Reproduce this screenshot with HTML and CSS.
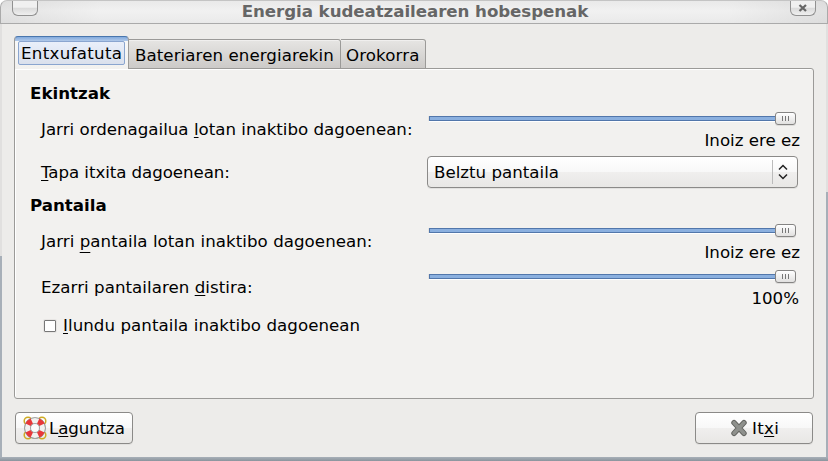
FILE: index.html
```html
<!DOCTYPE html>
<html lang="eu">
<head>
<meta charset="utf-8">
<title>Energia kudeatzailearen hobespenak</title>
<link rel="stylesheet" href="styles.css">
</head>
<body>
<div class="window">
  <header class="titlebar">
    <div class="wm-button"></div>
    <h1>Energia kudeatzailearen hobespenak</h1>
    <div class="wm-button wm-close"><svg width="10" height="9" viewBox="0 0 10 9"><path d="M1.5 1 8 7M8 1 1.5 7" stroke="#666" stroke-width="2.3"/></svg></div>
  </header>
  <main class="client">
    <nav class="tabs">
      <div class="tab active"><span class="focus">Entxufatuta</span></div>
      <div class="tab battery">Bateriaren energiarekin</div>
      <div class="tab general">Orokorra</div>
    </nav>
    <section class="panel">
      <h2>Ekintzak</h2>
      <div class="row">
        <label>Jarri ordenagailua <u>l</u>otan inaktibo dagoenean:</label>
        <div class="scale"><div class="slider"><div class="trough"></div><div class="thumb"><i></i><i></i><i></i></div></div><div class="value">Inoiz ere ez</div></div>
      </div>
      <div class="row combo-row">
        <label><u>T</u>apa itxita dagoenean:</label>
        <div class="combo"><span>Belztu pantaila</span><div class="arrows"><svg width="10" height="16" viewBox="0 0 10 16"><path d="M1 5.5 5 1.5 9 5.5M1 10.5 5 14.5 9 10.5" fill="none" stroke="#222" stroke-width="1.5"/></svg></div></div>
      </div>
      <h2 class="second">Pantaila</h2>
      <div class="row screen">
        <label>Jarri <u class="low">p</u>antaila lotan inaktibo dagoenean:</label>
        <div class="scale"><div class="slider"><div class="trough"></div><div class="thumb"><i></i><i></i><i></i></div></div><div class="value">Inoiz ere ez</div></div>
      </div>
      <div class="row brightness">
        <label>Ezarri pantailaren <u>d</u>istira:</label>
        <div class="scale"><div class="slider"><div class="trough"></div><div class="thumb"><i></i><i></i><i></i></div></div><div class="value percent">100%</div></div>
      </div>
      <div class="check"><span class="box"></span><span class="check-text"><u>I</u>lundu pantaila inaktibo dagoenean</span></div>
    </section>
    <footer class="actions">
      <div class="button help">
        <svg width="24" height="24" viewBox="0 0 24 24">
          <g fill="none" stroke="#cfab22" stroke-width="1.5"><circle cx="5" cy="5" r="3.8"/><circle cx="19" cy="5" r="3.8"/><circle cx="5" cy="19" r="3.8"/><circle cx="19" cy="19" r="3.8"/></g>
          <circle cx="12" cy="12" r="7.4" fill="none" stroke="#8a8a88" stroke-width="6.8"/>
          <circle cx="12" cy="12" r="7.4" fill="none" stroke="#f1f1ef" stroke-width="5.2"/>
          <circle cx="12" cy="12" r="7.6" fill="none" stroke="#e8383a" stroke-width="5.8" pathLength="80" stroke-dasharray="9 11" stroke-dashoffset="-5.5"/>
          <circle cx="12" cy="12" r="4.5" fill="#fcfcfc" stroke="#999" stroke-width=".8"/>
        </svg>
        <span>L<u>a</u>guntza</span>
      </div>
      <div class="button close">
        <svg width="18" height="18" viewBox="0 0 18 18"><path d="M4 3.7 14 14.3M14 3.7 4 14.3" stroke="#62635f" stroke-width="5.4" stroke-linecap="round"/><path d="M4 3.7 14 14.3M14 3.7 4 14.3" stroke="#8f918d" stroke-width="3.5" stroke-linecap="round"/></svg>
        <span>It<u>x</u>i</span>
      </div>
    </footer>
  </main>
</div>
</body>
</html>
```
FILE: styles.css
```css
* { box-sizing: border-box; }
body { margin: 0; width: 828px; height: 461px; overflow: hidden; font: 16.67px/20px "DejaVu Sans", sans-serif; color: #000; background: #fff; white-space: nowrap; }
.window { height: 461px; display: flex; flex-direction: column; }
.titlebar { height: 24px; display: flex; justify-content: space-between; align-items: flex-start; padding: 0 11px; border: 1px solid #aaa; border-top-color: #c4c4c4; border-radius: 7px 7px 0 0; background: linear-gradient(to right, rgba(218,218,218,.6), rgba(240,240,240,.5) 12% 88%, rgba(218,218,218,.7)), linear-gradient(#e2e2e2, #f2f2f2 45%, #e3e3e3); }
.titlebar h1 { margin: 1px 0 0 2px; font-size: 16.67px; line-height: 20px; font-weight: bold; letter-spacing: -.06px; color: #666; }
.wm-button { width: 26px; height: 15px; border: 1px solid #919191; border-top: 0; border-radius: 0 0 6px 6px; background: linear-gradient(#f0f0f0 45%, #dadada 50%, #efefef); display: flex; justify-content: center; align-items: center; }
.client { flex: 1; display: flex; flex-direction: column; padding: 12px 12px 0; border: solid transparent; border-width: 0 2px 4px; background: linear-gradient(#edecea, #edecea) padding-box, linear-gradient(#a8b0b8, #8b949d) bottom / 100% 4px no-repeat border-box, linear-gradient(#e1e0df 232px, #a7afb8 232px) left / 50% 100% no-repeat border-box, linear-gradient(#e1e0df 168px, #a7afb8 168px) right / 50% 100% no-repeat border-box; }
.tabs { display: flex; align-items: flex-end; height: 33px; z-index: 1; }
.tab { height: 30px; padding: 6px 0 0 6px; border: 1px solid #9b9a98; border-left-width: 0; border-radius: 0 3px 0 0; background: linear-gradient(#e6e5e3, #cccac8); box-shadow: inset 0 1px #f0efee; }
.tab.active { width: 115px; height: 33px; padding: 2px 3px 0; border: 1px solid #9b9a98; border-top: 1px solid #4976ad; border-bottom: 0; border-radius: 4px 4px 0 0; background: linear-gradient(#82aadd, #b1c9e9 4px, #f8f8f7 4px, #f2f1ef); box-shadow: none; letter-spacing: .3px; }
.focus { display: block; height: 24px; margin-top: 2px; padding: 2px 0 0 2px; line-height: 19px; border: 1px solid #8aa5cf; border-radius: 2px; background: linear-gradient(#e9effa, #dae0ec); }
.battery { width: 212px; letter-spacing: .07px; }
.general { width: 85px; padding-left: 5px; letter-spacing: .1px; }
.panel { height: 331px; margin-top: -1px; padding: 15px 15px 0; border: 1px solid #9b9a98; border-radius: 0 3px 3px 3px; background: #f2f1ef; box-shadow: inset 1px 1px #fff; }
h2 { margin: 0 0 5px; font-size: 16.67px; line-height: 20px; }
h2.second { margin-top: 8px; }
.row { display: grid; grid-template-columns: 386px 371px; align-items: center; height: 41px; padding-left: 11px; }
.combo-row { height: 32px; margin-top: 6px; }
.combo-row label { padding-top: 1px; letter-spacing: -.07px; }
.screen label { letter-spacing: .04px; }
.brightness { margin-top: 5px; }
.brightness label { letter-spacing: .04px; }
.scale { height: 41px; padding-left: 2px; }
.slider { height: 22px; display: flex; align-items: center; padding-bottom: 3px; }
.trough { width: 346px; height: 5px; border: 1px solid #5277ab; border-right: 0; background: #8bb0df; box-shadow: 0 1px #fff, -1px 0 #e5e3e0; }
.thumb { width: 21px; height: 13px; display: flex; justify-content: center; align-items: center; gap: 2px; border: 1px solid #858483; border-radius: 3px; background: linear-gradient(#fff, #e1e0df); box-shadow: 0 1px #dddcda; }
.thumb i { width: 1px; height: 5px; background: #777; }
.value { text-align: right; margin-right: -2px; }
.percent { margin-right: -1px; }
.combo, .button { height: 32px; display: flex; align-items: center; border: 1px solid #8b8a88; border-radius: 4px; background: linear-gradient(#fff, #f8f8f8 49%, #f0efee 51%, #e8e7e5); box-shadow: 0 1px #e2e1df; }
.combo > span, .button > span { padding-top: 2px; }
.combo { justify-content: space-between; padding-left: 6px; }
.arrows { width: 25px; height: 24px; padding-left: 5px; display: flex; align-items: center; border-left: 1px solid #bbb; }
.check { display: flex; align-items: center; margin-top: 7px; padding-left: 14px; gap: 7px; }
.check-text { padding-top: 1px; letter-spacing: .05px; }
.box { width: 12px; height: 12px; border: 1px solid #777; background: #fff; border-radius: 1px; box-shadow: 0 0 0 1px #e7e5e3; }
u { text-decoration-thickness: 1px; text-underline-offset: 2px; text-decoration-skip-ink: none; }
u.low { text-underline-offset: 5px; }
.actions { display: flex; justify-content: space-between; margin: 13px 1px 0; }
.button svg { flex: none; }
.help { width: 118px; padding-left: 7px; gap: 2px; letter-spacing: -.1px; }
.close { width: 118px; padding-left: 34px; gap: 4px; letter-spacing: .3px; }
```
